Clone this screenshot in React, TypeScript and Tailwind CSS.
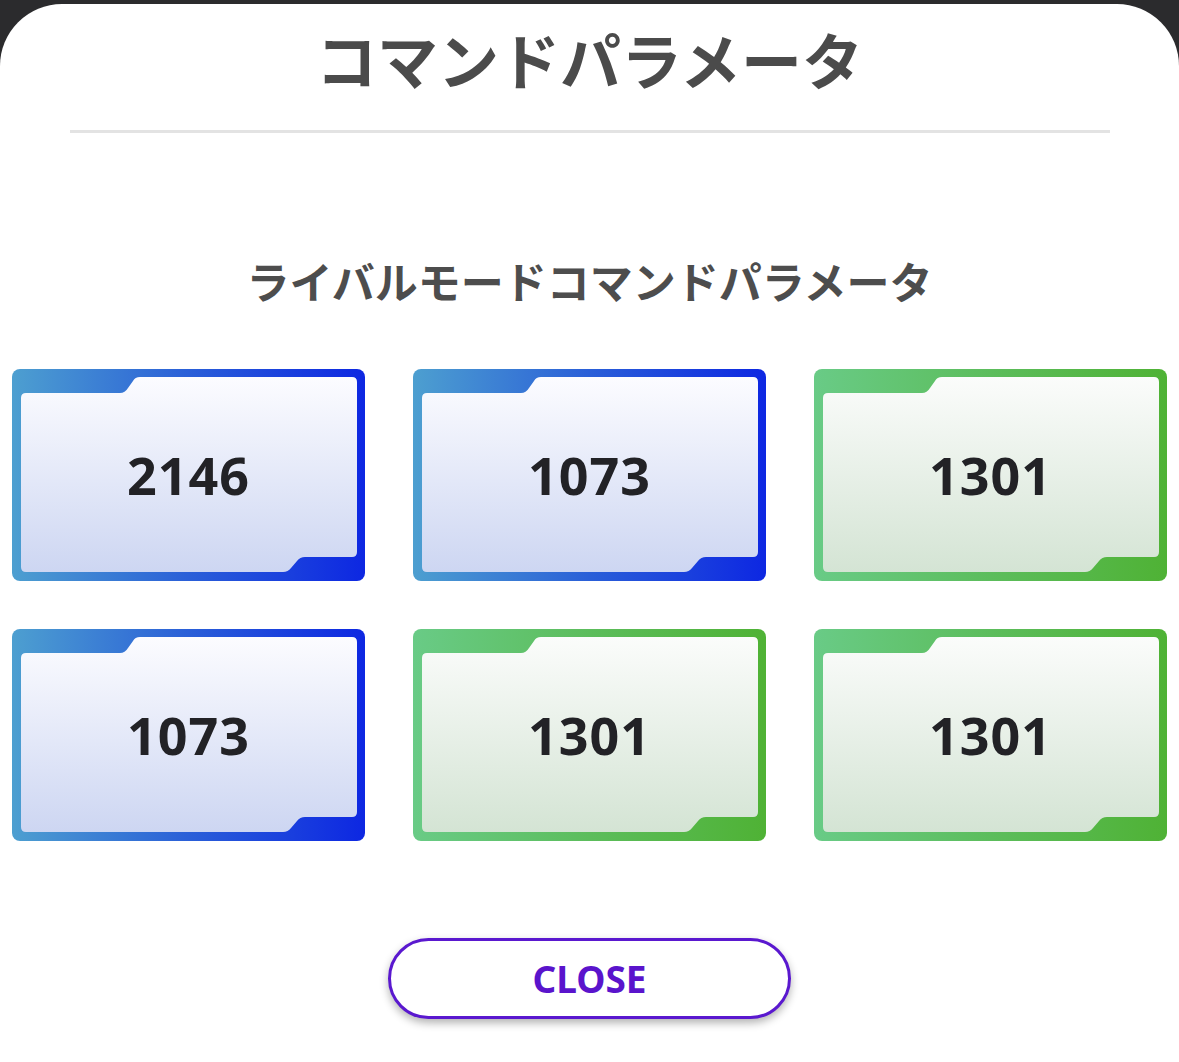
import { useId } from "react";

type Tone = "blue" | "green";

const cards: { value: string; tone: Tone }[] = [
  { value: "2146", tone: "blue" },
  { value: "1073", tone: "blue" },
  { value: "1301", tone: "green" },
  { value: "1073", tone: "blue" },
  { value: "1301", tone: "green" },
  { value: "1301", tone: "green" },
];

const palette = {
  blue: { edge: ["#4d9fd0", "#2a5fd8", "#0d27e2"], face: ["#fcfcff", "#cdd6f2"] },
  green: { edge: ["#69cb86", "#5cbd5c", "#4fb235"], face: ["#fbfcfb", "#d4e4d4"] },
};

const ParamCard = ({ value, tone }: { value: string; tone: Tone }) => {
  const id = useId().replace(/:/g, "");
  const c = palette[tone];
  return (
    <div className="relative w-[353px] h-[212px] flex items-center justify-center">
      <svg className="absolute inset-0" width="353" height="212" viewBox="0 0 353 212">
        <defs>
          <linearGradient id={`e${id}`} x1="0" y1="0" x2="1" y2="0">
            <stop offset="0" stopColor={c.edge[0]} />
            <stop offset="0.5" stopColor={c.edge[1]} />
            <stop offset="1" stopColor={c.edge[2]} />
          </linearGradient>
          <linearGradient id={`f${id}`} x1="0" y1="0" x2="0" y2="1">
            <stop offset="0" stopColor={c.face[0]} />
            <stop offset="1" stopColor={c.face[1]} />
          </linearGradient>
        </defs>
        <rect x="0" y="0" width="353" height="212" rx="8" fill={`url(#e${id})`} />
        <path
          d="M9,29 Q9,24 14,24 L108,24 Q113,24 116,19 L121,12 Q123,8 128,8 L340,8 Q345,8 345,13 L345,183 Q345,188 340,188 L293,188 Q288,188 285,192 L279,199 Q276,203 271,203 L14,203 Q9,203 9,198 Z"
          fill={`url(#f${id})`}
        />
      </svg>
      <span className="relative font-['Noto_Sans',sans-serif] font-bold text-[52px] leading-none tracking-[1px] text-[#222226]">
        {value}
      </span>
    </div>
  );
};

const App = () => {
  return (
    <div className="bg-[#2b2b2d] pt-[4px] h-[1062px] overflow-hidden">
      <div className="bg-white rounded-t-[62px] h-[1058px] flex flex-col items-center font-['Noto_Sans_CJK_JP','Noto_Sans',sans-serif]">
        <h1 className="mt-[24px] h-[61px] text-[61px] leading-[61px] font-bold text-[#4b4b4b]">
          コマンドパラメータ
        </h1>
        <div className="mt-[41px] h-[3px] w-[1040px] bg-[#e3e3e3]"></div>

        <p className="mt-[126px] h-[43px] text-[43px] leading-[43px] font-bold text-[#4d4d4d]">
          ライバルモードコマンドパラメータ
        </p>

        <div className="mt-[67px] grid grid-cols-3 gap-x-[48px] gap-y-[48px]">
          {cards.map((card, i) => (
            <ParamCard key={i} value={card.value} tone={card.tone} />
          ))}
        </div>

        <button className="mt-[97px] w-[403px] h-[81px] rounded-full border-[3px] border-[#5a18cf] bg-white shadow-[0_4px_8px_rgba(0,0,0,0.3)] font-['Noto_Sans',sans-serif] font-bold text-[37px] leading-none text-[#5a14cc]">
          CLOSE
        </button>
      </div>
    </div>
  );
};

export default App;
